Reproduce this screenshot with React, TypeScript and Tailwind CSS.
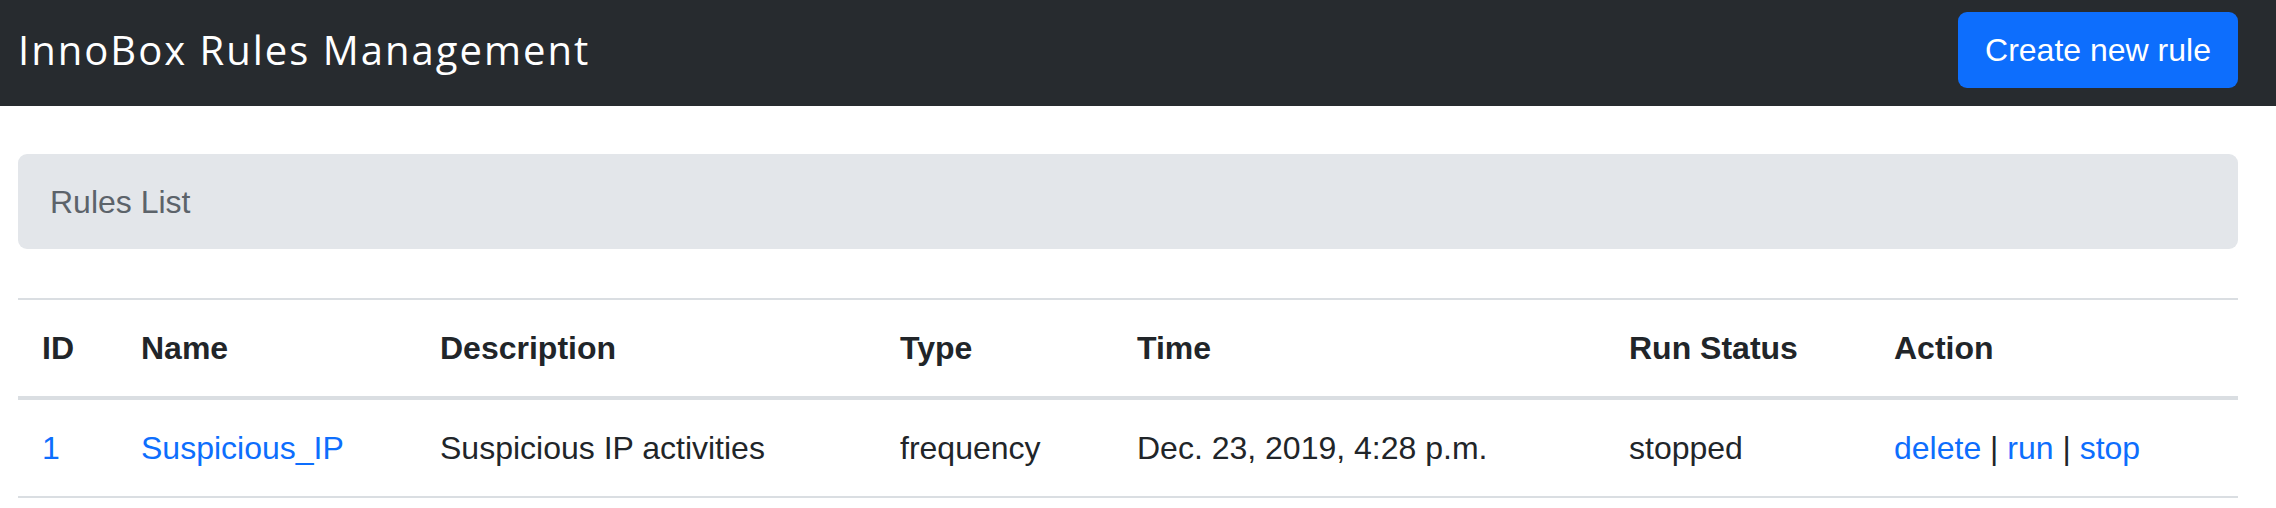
import React from "react";

const columns = [
  { label: "ID", width: "w-[99px]" },
  { label: "Name", width: "w-[299px]" },
  { label: "Description", width: "w-[460px]" },
  { label: "Type", width: "w-[237px]" },
  { label: "Time", width: "w-[492px]" },
  { label: "Run Status", width: "w-[265px]" },
  { label: "Action", width: "w-[368px]" },
];

const rules = [
  {
    id: 1,
    name: "Suspicious_IP",
    description: "Suspicious IP activities",
    type: "frequency",
    time: "Dec. 23, 2019, 4:28 p.m.",
    status: "stopped",
  },
];

const App = () => {
  return (
    <div className="min-h-screen bg-white text-[#212529] font-['Liberation_Sans',Arial,sans-serif]">
      {/* Navbar */}
      <nav className="flex h-[106px] items-start justify-between bg-[#272b2f] pl-[18px] pr-[38px] pt-[12px]">
        <div className="flex h-[76px] items-center font-['Open_Sans',sans-serif] text-[40px] font-normal tracking-[2px] text-white">
          InnoBox Rules Management
        </div>
        <button className="h-[76px] w-[280px] rounded-[9px] bg-[#0d6efd] text-[32px] leading-[48px] text-white">
          Create new rule
        </button>
      </nav>

      <div className="pl-[18px] pr-[38px] pt-[48px]">
        {/* Breadcrumb */}
        <div className="flex h-[95px] items-center rounded-[9px] bg-[#e3e6ea] px-[32px] text-[32px] text-[#5c636a]">
          Rules List
        </div>

        {/* Table */}
        <table className="mt-[49px] w-full border-collapse text-[32px] leading-[48px]">
          <thead>
            <tr className="border-t-2 border-b-4 border-[#dadee2]">
              {columns.map((c) => (
                <th key={c.label} className={`${c.width} px-[24px] py-[24px] text-left align-middle font-bold`}>
                  {c.label}
                </th>
              ))}
            </tr>
          </thead>
          <tbody>
            {rules.map((r) => (
              <tr key={r.id} className="border-b-2 border-[#dadee2]">
                <td className="px-[24px] py-[24px] text-[#0d6efd]">{r.id}</td>
                <td className="px-[24px] py-[24px] text-[#0d6efd]">{r.name}</td>
                <td className="px-[24px] py-[24px]">{r.description}</td>
                <td className="px-[24px] py-[24px]">{r.type}</td>
                <td className="px-[24px] py-[24px]">{r.time}</td>
                <td className="px-[24px] py-[24px]">{r.status}</td>
                <td className="px-[24px] py-[24px]">
                  <span className="text-[#0d6efd]">delete</span> | <span className="text-[#0d6efd]">run</span> |{" "}
                  <span className="text-[#0d6efd]">stop</span>
                </td>
              </tr>
            ))}
          </tbody>
        </table>
      </div>
    </div>
  );
};

export default App;
